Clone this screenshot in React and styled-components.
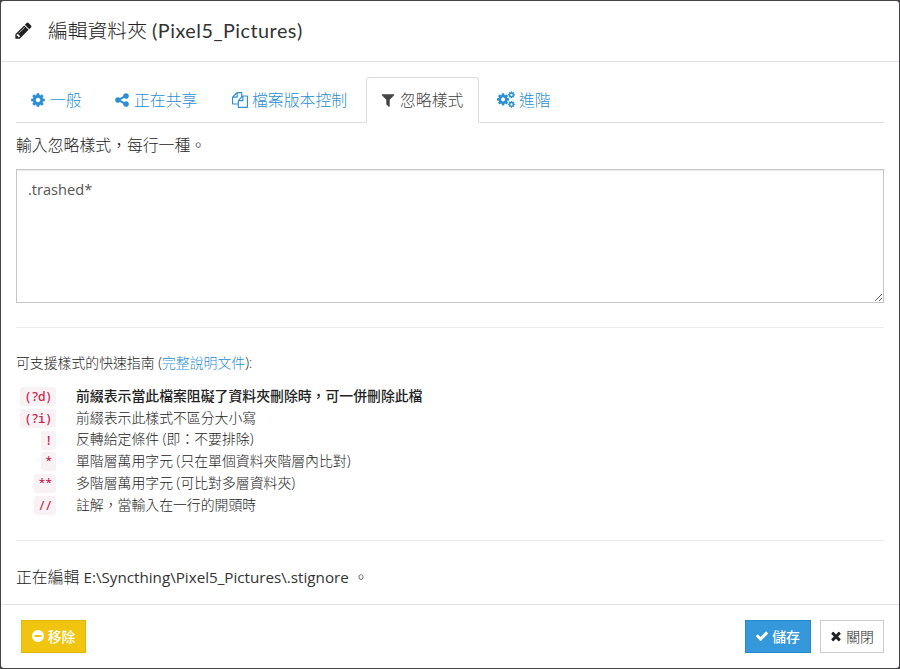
import React from 'react';
import styled, { createGlobalStyle } from 'styled-components';

const Global = createGlobalStyle`
  * { box-sizing: border-box; }
  html, body { margin: 0; background: #464446; }
  body { font-family: "Open Sans", "Noto Sans CJK TC", sans-serif; font-size: 15.85px; color: #222; }
`;

const paths = {
  pencil: 'M491 1536l91-91-235-235-91 91v107h128v128h107zm523-928q0-22-22-22-10 0-17 7l-542 542q-7 7-7 17 0 22 22 22 10 0 17-7l542-542q7-7 7-17zm-54-192l416 416-832 832h-416v-416zm683 96q0 53-37 90l-166 166-416-416 166-165q36-38 90-38 53 0 91 38l235 234q37 39 37 91z',
  cog: 'M1152 896q0-106-75-181t-181-75-181 75-75 181 75 181 181 75 181-75 75-181zm512-109v222q0 12-8 23t-20 13l-185 28q-19 54-39 91 35 50 107 138 10 12 10 25t-9 23q-27 37-99 108t-94 71q-12 0-26-9l-138-108q-44 23-91 38-16 136-29 186-7 28-36 28h-222q-14 0-24.5-8.5t-11.5-21.5l-28-184q-49-16-90-37l-141 107q-10 9-25 9-14 0-25-11-126-114-165-168-7-10-7-23 0-12 8-23 15-21 51-66.5t54-70.5q-27-50-41-99l-183-27q-13-2-21-12.5t-8-23.5v-222q0-12 8-23t19-13l186-28q14-46 39-92-40-57-107-138-10-12-10-24 0-10 9-23 26-36 98.5-107.5t94.5-71.5q13 0 26 10l138 107q44-23 91-38 16-136 29-186 7-28 36-28h222q14 0 24.5 8.5t11.5 21.5l28 184q49 16 90 37l142-107q9-9 24-9 13 0 25 10 129 119 165 170 7 8 7 22 0 12-8 23-15 21-51 66.5t-54 70.5q26 50 41 98l183 28q13 2 21 12.5t8 23.5z',
  share: 'M1344 1024q133 0 226.5 93.5t93.5 226.5-93.5 226.5-226.5 93.5-226.5-93.5-93.5-226.5q0-12 2-34l-360-180q-92 86-218 86-133 0-226.5-93.5t-93.5-226.5 93.5-226.5 226.5-93.5q126 0 218 86l360-180q-2-22-2-34 0-133 93.5-226.5t226.5-93.5 226.5 93.5 93.5 226.5-93.5 226.5-226.5 93.5q-126 0-218-86l-360 180q2 22 2 34t-2 34l360 180q92-86 218-86z',
  files: 'M1696 384q40 0 68 28t28 68v1216q0 40-28 68t-68 28h-960q-40 0-68-28t-28-68v-288h-544q-40 0-68-28t-28-68v-672q0-40 20-88t48-76l408-408q28-28 76-48t88-20h416q40 0 68 28t28 68v328q68-40 128-40h416zm-544 213l-299 299h299v-299zm-640-384l-299 299h299v-299zm196 647l316-316v-416h-384v416q0 40-28 68t-68 28h-416v640h512v-256q0-40 20-88t48-76zm956 804v-1152h-384v416q0 40-28 68t-68 28h-416v640h896z',
  filter: 'M1595 295q17 41-14 70l-493 493v742q0 42-39 59-13 5-25 5-27 0-45-19l-256-256q-19-19-19-45v-486l-493-493q-31-29-14-70 17-39 59-39h1280q42 0 59 39z',
  minus: 'M1344 960v-128q0-26-19-45t-45-19h-768q-26 0-45 19t-19 45v128q0 26 19 45t45 19h768q26 0 45-19t19-45zm320-64q0 209-103 385.5t-279.5 279.5-385.5 103-385.5-103-279.5-279.5-103-385.5 103-385.5 279.5-279.5 385.5-103 385.5 103 279.5 279.5 103 385.5z',
  check: 'M1671 566q0 40-28 68l-724 724-136 136q-28 28-68 28t-68-28l-136-136-362-362q-28-28-28-68t28-68l136-136q28-28 68-28t68 28l294 295 656-657q28-28 68-28t68 28l136 136q28 28 28 68z',
  times: 'M1490 1322q0 40-28 68l-136 136q-28 28-68 28t-68-28l-294-294-294 294q-28 28-68 28t-68-28l-136-136q-28-28-28-68t28-68l294-294-294-294q-28-28-28-68t28-68l136-136q28-28 68-28t68 28l294 294 294-294q28-28 68-28t68 28l136 136q28 28 28 68t-28 68l-294 294 294 294q28 28 28 68z',
};

const Svg = styled.svg`
  flex: none;
  width: ${(p) => p.$w}px;
  height: ${(p) => p.$h || p.$w}px;
  fill: currentColor;
`;

function Icon({ name, size }) {
  return (
    <Svg $w={size} viewBox="0 0 1792 1792"><path d={paths[name]} /></Svg>
  );
}

function Cogs() {
  return (
    <Svg $w={18} $h={17} viewBox="0 0 1920 1792">
      <path d={paths.cog} transform="translate(-107 131) scale(.84)" />
      <path d={paths.cog} transform="translate(1120 -20) scale(.47)" />
      <path d={paths.cog} transform="translate(1120 990) scale(.47)" />
    </Svg>
  );
}

const Modal = styled.main`
  width: 898px;
  height: 667px;
  margin: 1px;
  background: #fff;
  border-radius: 3px;
  display: flex;
  flex-direction: column;
`;

const Header = styled.header`
  height: 61px;
  flex: none;
  border-bottom: 1px solid #e2e2e2;
  padding: 0 0 1px 13px;
  display: flex;
  align-items: center;
`;

const Title = styled.h1`
  margin: 0 0 0 15px;
  font-size: 19.8px;
  font-weight: 300;
  line-height: 28px;
  color: #222;
  white-space: pre;
`;

const TitleLatin = styled.span`
  font-family: Lato, sans-serif;
  font-weight: 400;
  color: #333;
  letter-spacing: .5px;
`;

const Body = styled.section`
  flex: 1;
  padding: 15px 15px 0;
`;

const Tabs = styled.nav`
  height: 46px;
  display: flex;
  border-bottom: 1px solid #ddd;
`;

const Tab = styled.a`
  height: 46px;
  width: ${(p) => p.$w}px;
  margin-right: 2px;
  display: flex;
  align-items: center;
  padding: 0 0 1px ${(p) => p.$inset || 13}px;
  gap: ${(p) => p.$gap || 4}px;
  font-weight: 300;
  color: ${(p) => (p.$active ? '#444' : '#2a8fd3')};
  border: 1px solid ${(p) => (p.$active ? '#ddd' : 'transparent')};
  border-bottom-color: ${(p) => (p.$active ? '#fff' : 'transparent')};
  background: ${(p) => (p.$active ? '#fff' : 'none')};
  border-radius: 3px 3px 0 0;
  white-space: nowrap;
`;

const Para = styled.p`
  margin: 0;
  line-height: 22px;
  font-weight: 300;
  padding-top: ${(p) => p.$top}px;
  font-size: ${(p) => (p.$small ? 13.87 : 15.85)}px;
  white-space: pre;
`;

const Area = styled.textarea`
  display: block;
  width: 868px;
  height: 134px;
  margin: 13px 0 0;
  padding: 8px 11px;
  border: 1px solid #c6c6c6;
  border-radius: 0;
  outline: none;
  resize: vertical;
  color: #555;
  background: #fff;
  font: 400 14.6px/22px "Open Sans", sans-serif;
  box-shadow: inset 0 1px 1px rgba(0, 0, 0, .075);
`;

const Rule = styled.hr`
  height: 1px;
  border: 0;
  background: #eee;
  margin: ${(p) => p.$top}px 0 0;
`;

const Link = styled.a`
  color: #2a8fd3;
`;

const Patterns = styled.dl`
  margin: 10px 0 0;
  display: grid;
  grid-template-columns: 42px 1fr;
  column-gap: 18px;
  grid-auto-rows: 21.8px;
  align-items: center;
  font-size: 13.87px;
`;

const Term = styled.dt`
  display: flex;
  justify-content: flex-end;
  padding: 3px 2px 0 0;
`;

const Code = styled.code`
  font: 500 12.4px/20px "Noto Sans Mono", "DejaVu Sans Mono", monospace;
  letter-spacing: -.5px;
  padding: 0 4px;
  height: 19px;
  color: #c7254e;
  background: #f9f2f4;
  border-radius: 3px;
`;

const Meaning = styled.dd`
  margin: 0;
  font-weight: ${(p) => (p.$strong ? 500 : 300)};
  white-space: nowrap;
`;

const Latin = styled.span`
  font-size: 15.2px;
  font-weight: 400;
  color: #333;
`;

const Footer = styled.footer`
  height: 64px;
  flex: none;
  border-top: 1px solid #e2e2e2;
  display: flex;
  align-items: flex-start;
  padding: 15px 15px 0 20px;
`;

const tones = {
  warning: ['#f1c40f', '#dfb50e', '#fff'],
  primary: ['#3498db', '#2688ca', '#fff'],
  plain: ['#fff', '#ccc', '#222'],
};

const Button = styled.button`
  width: ${(p) => p.$w}px;
  height: 33px;
  margin-left: ${(p) => (p.$push ? 'auto' : p.$tone === 'plain' ? '9px' : '0')};
  padding: 0 1px 1px 0;
  display: flex;
  align-items: center;
  justify-content: center;
  gap: 3px;
  font: ${(p) => (p.$tone === 'plain' ? 300 : 500)} 13.87px "Noto Sans CJK TC", sans-serif;
  background: ${(p) => tones[p.$tone][0]};
  border: 1px solid ${(p) => tones[p.$tone][1]};
  color: ${(p) => tones[p.$tone][2]};
`;

const patterns = [
  ['(?d)', '前綴表示當此檔案阻礙了資料夾刪除時，可一併刪除此檔', true],
  ['(?i)', '前綴表示此樣式不區分大小寫'],
  ['!', '反轉給定條件 (即：不要排除)'],
  ['*', '單階層萬用字元 (只在單個資料夾階層內比對)'],
  ['**', '多階層萬用字元 (可比對多層資料夾)'],
  ['//', '註解，當輸入在一行的開頭時'],
];

export default function App() {
  return (
    <>
      <Global />
      <Modal lang="zh-TW">
        <Header>
          <Icon name="pencil" size={19} />
          <Title>編輯資料夾 <TitleLatin>(Pixel5_Pictures)</TitleLatin></Title>
        </Header>
        <Body>
          <Tabs>
            <Tab $w={82}><Icon name="cog" size={16} />一般</Tab>
            <Tab $w={115}><Icon name="share" size={16} />正在共享</Tab>
            <Tab $w={147} $inset={14}><Icon name="files" size={16} />檔案版本控制</Tab>
            <Tab $w={113} $active><Icon name="filter" size={16} />忽略樣式</Tab>
            <Tab $w={85} $inset={15}><Cogs />進階</Tab>
          </Tabs>
          <Para $top={11}>輸入忽略樣式，每行一種。</Para>
          <Area defaultValue=".trashed*" spellCheck={false} />
          <Rule $top={24} />
          <Para $small $top={24}>可支援樣式的快速指南 (<Link>完整說明文件</Link>):</Para>
          <Patterns>
            {patterns.map(([code, text, strong]) => (
              <React.Fragment key={code}>
                <Term><Code>{code}</Code></Term>
                <Meaning $strong={strong}>{text}</Meaning>
              </React.Fragment>
            ))}
          </Patterns>
          <Rule $top={25} />
          <Para $top={25}>正在編輯 <Latin>E:\Syncthing\Pixel5_Pictures\.stignore</Latin> 。</Para>
        </Body>
        <Footer>
          <Button $w={65} $tone="warning"><Icon name="minus" size={14} />移除</Button>
          <Button $w={66} $tone="primary" $push><Icon name="check" size={14} />儲存</Button>
          <Button $w={64} $tone="plain"><Icon name="times" size={14} />關閉</Button>
        </Footer>
      </Modal>
    </>
  );
}
